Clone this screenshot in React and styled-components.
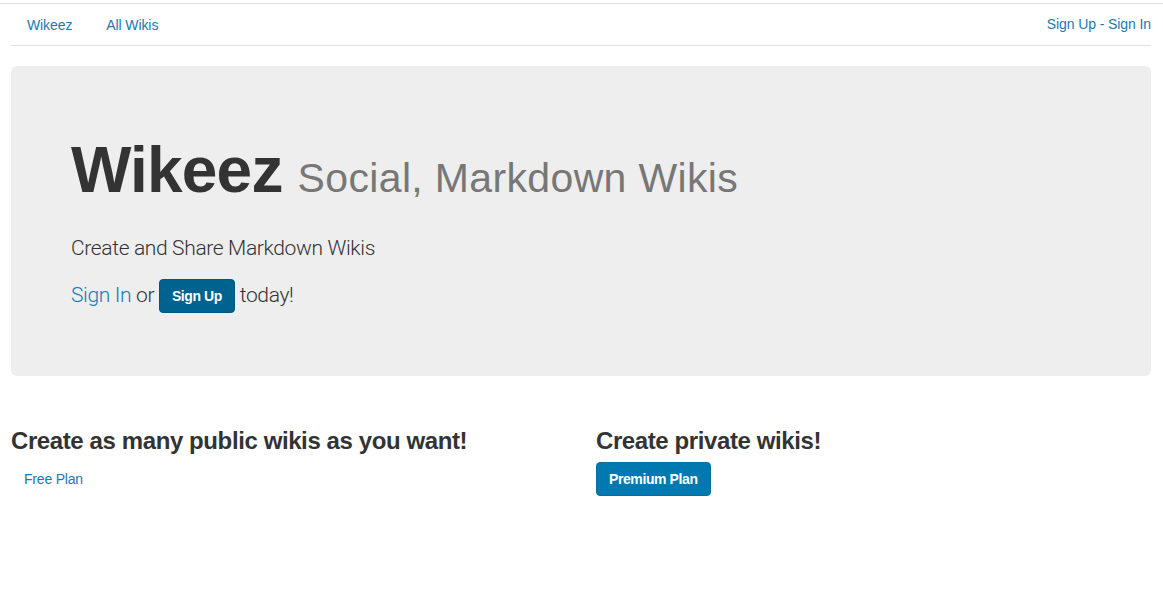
import React from 'react'
import styled, { createGlobalStyle } from 'styled-components'

const GlobalStyle = createGlobalStyle`
  html, body {
    margin: 0;
    padding: 0;
    background: #fff;
  }
  body {
    font-family: "Liberation Sans", Arial, sans-serif;
    font-size: 14px;
    color: #333;
  }
  * {
    box-sizing: border-box;
  }
`;

const App = () => {
  return (
    <Page>
      <GlobalStyle />
      <Container>
        <Navbar>
          <NavLinks>
            <NavLink href="#">Wikeez</NavLink>
            <NavLink href="#">All Wikis</NavLink>
          </NavLinks>
          <AuthLinks>
            <a href="#">Sign Up</a> - <a href="#">Sign In</a>
          </AuthLinks>
        </Navbar>

        <Jumbotron>
          <Title>
            Wikeez <small>Social, Markdown Wikis</small>
          </Title>
          <Lead>Create and Share Markdown Wikis</Lead>
          <Lead>
            <LightLink href="#">Sign In</LightLink> or{' '}
            <Button $dark>Sign Up</Button> today!
          </Lead>
        </Jumbotron>

        <Row>
          <Col>
            <Heading>Create as many public wikis as you want!</Heading>
            <PlanLink href="#">Free Plan</PlanLink>
          </Col>
          <Col>
            <Heading>Create private wikis!</Heading>
            <Button>Premium Plan</Button>
          </Col>
        </Row>
      </Container>
    </Page>
  )
}

export default App;


const Page = styled.div`
  margin-top: 3px;
  border-top: 1px solid #e3e3e3;
  min-height: 594px;
`;

const Container = styled.div`
  width: 1140px;
  margin-left: 11px;
`;

const Navbar = styled.nav`
  height: 42px;
  display: flex;
  justify-content: space-between;
  align-items: center;
  border-bottom: 1px solid #dedede;
`;

const NavLinks = styled.div`
  display: flex;
  padding-left: 16px;
  gap: 34px;
  margin-top: 1px;
`;

const NavLink = styled.a`
  color: #1a79b4;
  text-decoration: none;
  font-size: 14px;
  letter-spacing: -0.1px;
`;

const AuthLinks = styled.div`
  color: #1a79b4;
  font-size: 14px;
  margin-right: 0;
  margin-top: -2px;
  letter-spacing: -0.1px;
  a {
    color: #1a79b4;
    text-decoration: none;
  }
`;

const Jumbotron = styled.section`
  margin-top: 20px;
  height: 310px;
  background: #eeeeee;
  border-radius: 6px;
  padding: 69px 60px 0;
`;

const Title = styled.h1`
  margin: 0;
  font-size: 64px;
  line-height: 1.1;
  font-weight: 700;
  color: #333;
  letter-spacing: -0.8px;
  word-spacing: -2px;
  small {
    font-size: 41px;
    font-weight: 400;
    color: #777;
    letter-spacing: 0.35px;
    word-spacing: 0;
  }
`;

const Lead = styled.p`
  margin: 29px 0 0;
  font-family: Roboto, "Liberation Sans", sans-serif;
  font-weight: 300;
  font-size: 21px;
  line-height: 1.4;
  color: #333;
  letter-spacing: -0.35px;
  & + & {
    margin-top: 15px;
  }
`;

const LightLink = styled.a`
  color: #1a79b4;
  text-decoration: none;
`;

const Button = styled.button`
  display: inline-block;
  vertical-align: middle;
  border: 1px solid ${({ $dark }) => ($dark ? '#00577d' : '#0a6d9c')};
  background: ${({ $dark }) => ($dark ? '#00628f' : '#0079b0')};
  color: #fff;
  font-family: "Liberation Sans", Arial, sans-serif;
  font-size: 14px;
  font-weight: 700;
  line-height: 20px;
  letter-spacing: -0.4px;
  padding: 6px 12px;
  border-radius: 4px;
  margin-top: 0;
`;

const Row = styled.div`
  display: grid;
  grid-template-columns: 585px 1fr;
  margin-top: 52px;
`;

const Col = styled.div`
  display: flex;
  flex-direction: column;
  align-items: flex-start;
`;

const Heading = styled.h3`
  margin: 0 0 8px;
  font-size: 24px;
  line-height: 1.1;
  font-weight: 700;
  color: #333;
  letter-spacing: -0.4px;
`;

const PlanLink = styled.a`
  color: #1a79b4;
  text-decoration: none;
  font-size: 14px;
  line-height: 20px;
  padding: 7px 13px;
  letter-spacing: -0.2px;
`;
